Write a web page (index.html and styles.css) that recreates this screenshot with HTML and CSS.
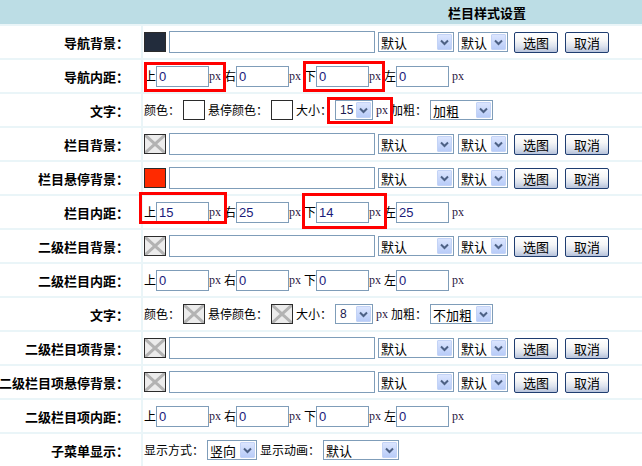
FILE: index.html
```html
<!DOCTYPE html>
<html lang="zh-CN">
<head>
<meta charset="utf-8">
<title>栏目样式设置</title>
<link rel="stylesheet" href="styles.css">
</head>
<body>
<div class="page">
  <div class="grid">
    <div class="head">栏目样式设置</div>

    <div class="label">导航背景：</div>
    <div class="cell">
      <span class="swatch dark"></span>
      <input class="txt wide" type="text" value="">
      <span class="sel s76"><span class="sv">默认</span><span class="arr"><svg width="13" height="14" viewBox="0 0 13 14"><path d="M3 5.5 L6.5 9 L10 5.5" fill="none" stroke="#4d6185" stroke-width="2"/></svg></span></span>
      <span class="sel s50 ml1"><span class="sv">默认</span><span class="arr"><svg width="13" height="14" viewBox="0 0 13 14"><path d="M3 5.5 L6.5 9 L10 5.5" fill="none" stroke="#4d6185" stroke-width="2"/></svg></span></span>
      <button class="btn b1" type="button">选图</button>
      <button class="btn b2" type="button">取消</button>
    </div>

    <div class="label">导航内距：</div>
    <div class="cell tight">
      <span>上</span><input class="txt sm" type="text" value="0"><span class="px">px</span>
      <span>右</span><input class="txt sm" type="text" value="0"><span class="px">px</span>
      <span>下</span><input class="txt sm" type="text" value="0"><span class="px">px</span>
      <span>左</span><input class="txt sm" type="text" value="0"><span class="px last">px</span>
    </div>

    <div class="label">文字：</div>
    <div class="cell">
      <span>颜色：</span><span class="swatch white"></span>
      <span>悬停颜色：</span><span class="swatch white"></span>
      <span>大小：</span>
      <span class="sel s38"><span class="sv num">15</span><span class="arr"><svg width="13" height="14" viewBox="0 0 13 14"><path d="M3 5.5 L6.5 9 L10 5.5" fill="none" stroke="#4d6185" stroke-width="2"/></svg></span></span>
      <span class="px">px</span>
      <span>加粗：</span>
      <span class="sel s63"><span class="sv">加粗</span><span class="arr"><svg width="13" height="14" viewBox="0 0 13 14"><path d="M3 5.5 L6.5 9 L10 5.5" fill="none" stroke="#4d6185" stroke-width="2"/></svg></span></span>
    </div>

    <div class="label">栏目背景：</div>
    <div class="cell">
      <span class="swatch none"><svg width="20" height="18" viewBox="0 0 20 18"><rect width="20" height="18" fill="#ececec"/><path d="M0 0 L20 18 M20 0 L0 18" stroke="#b3b3b3" stroke-width="3"/></svg></span>
      <input class="txt wide" type="text" value="">
      <span class="sel s76"><span class="sv">默认</span><span class="arr"><svg width="13" height="14" viewBox="0 0 13 14"><path d="M3 5.5 L6.5 9 L10 5.5" fill="none" stroke="#4d6185" stroke-width="2"/></svg></span></span>
      <span class="sel s50 ml1"><span class="sv">默认</span><span class="arr"><svg width="13" height="14" viewBox="0 0 13 14"><path d="M3 5.5 L6.5 9 L10 5.5" fill="none" stroke="#4d6185" stroke-width="2"/></svg></span></span>
      <button class="btn b1" type="button">选图</button>
      <button class="btn b2" type="button">取消</button>
    </div>

    <div class="label">栏目悬停背景：</div>
    <div class="cell">
      <span class="swatch red"></span>
      <input class="txt wide" type="text" value="">
      <span class="sel s76"><span class="sv">默认</span><span class="arr"><svg width="13" height="14" viewBox="0 0 13 14"><path d="M3 5.5 L6.5 9 L10 5.5" fill="none" stroke="#4d6185" stroke-width="2"/></svg></span></span>
      <span class="sel s50 ml1"><span class="sv">默认</span><span class="arr"><svg width="13" height="14" viewBox="0 0 13 14"><path d="M3 5.5 L6.5 9 L10 5.5" fill="none" stroke="#4d6185" stroke-width="2"/></svg></span></span>
      <button class="btn b1" type="button">选图</button>
      <button class="btn b2" type="button">取消</button>
    </div>

    <div class="label">栏目内距：</div>
    <div class="cell tight">
      <span>上</span><input class="txt sm" type="text" value="15"><span class="px">px</span>
      <span>右</span><input class="txt sm" type="text" value="25"><span class="px">px</span>
      <span>下</span><input class="txt sm" type="text" value="14"><span class="px">px</span>
      <span>左</span><input class="txt sm" type="text" value="25"><span class="px last">px</span>
    </div>

    <div class="label">二级栏目背景：</div>
    <div class="cell">
      <span class="swatch none"><svg width="20" height="18" viewBox="0 0 20 18"><rect width="20" height="18" fill="#ececec"/><path d="M0 0 L20 18 M20 0 L0 18" stroke="#b3b3b3" stroke-width="3"/></svg></span>
      <input class="txt wide" type="text" value="">
      <span class="sel s76"><span class="sv">默认</span><span class="arr"><svg width="13" height="14" viewBox="0 0 13 14"><path d="M3 5.5 L6.5 9 L10 5.5" fill="none" stroke="#4d6185" stroke-width="2"/></svg></span></span>
      <span class="sel s50 ml1"><span class="sv">默认</span><span class="arr"><svg width="13" height="14" viewBox="0 0 13 14"><path d="M3 5.5 L6.5 9 L10 5.5" fill="none" stroke="#4d6185" stroke-width="2"/></svg></span></span>
      <button class="btn b1" type="button">选图</button>
      <button class="btn b2" type="button">取消</button>
    </div>

    <div class="label">二级栏目内距：</div>
    <div class="cell tight">
      <span>上</span><input class="txt sm" type="text" value="0"><span class="px">px</span>
      <span>右</span><input class="txt sm" type="text" value="0"><span class="px">px</span>
      <span>下</span><input class="txt sm" type="text" value="0"><span class="px">px</span>
      <span>左</span><input class="txt sm" type="text" value="0"><span class="px last">px</span>
    </div>

    <div class="label">文字：</div>
    <div class="cell">
      <span>颜色：</span><span class="swatch none"><svg width="20" height="18" viewBox="0 0 20 18"><rect width="20" height="18" fill="#ececec"/><path d="M0 0 L20 18 M20 0 L0 18" stroke="#b3b3b3" stroke-width="3"/></svg></span>
      <span>悬停颜色：</span><span class="swatch none"><svg width="20" height="18" viewBox="0 0 20 18"><rect width="20" height="18" fill="#ececec"/><path d="M0 0 L20 18 M20 0 L0 18" stroke="#b3b3b3" stroke-width="3"/></svg></span>
      <span>大小：</span>
      <span class="sel s38"><span class="sv num">8</span><span class="arr"><svg width="13" height="14" viewBox="0 0 13 14"><path d="M3 5.5 L6.5 9 L10 5.5" fill="none" stroke="#4d6185" stroke-width="2"/></svg></span></span>
      <span class="px">px</span>
      <span>加粗：</span>
      <span class="sel s63"><span class="sv">不加粗</span><span class="arr"><svg width="13" height="14" viewBox="0 0 13 14"><path d="M3 5.5 L6.5 9 L10 5.5" fill="none" stroke="#4d6185" stroke-width="2"/></svg></span></span>
    </div>

    <div class="label">二级栏目项背景：</div>
    <div class="cell">
      <span class="swatch none"><svg width="20" height="18" viewBox="0 0 20 18"><rect width="20" height="18" fill="#ececec"/><path d="M0 0 L20 18 M20 0 L0 18" stroke="#b3b3b3" stroke-width="3"/></svg></span>
      <input class="txt wide" type="text" value="">
      <span class="sel s76"><span class="sv">默认</span><span class="arr"><svg width="13" height="14" viewBox="0 0 13 14"><path d="M3 5.5 L6.5 9 L10 5.5" fill="none" stroke="#4d6185" stroke-width="2"/></svg></span></span>
      <span class="sel s50 ml1"><span class="sv">默认</span><span class="arr"><svg width="13" height="14" viewBox="0 0 13 14"><path d="M3 5.5 L6.5 9 L10 5.5" fill="none" stroke="#4d6185" stroke-width="2"/></svg></span></span>
      <button class="btn b1" type="button">选图</button>
      <button class="btn b2" type="button">取消</button>
    </div>

    <div class="label">二级栏目项悬停背景：</div>
    <div class="cell">
      <span class="swatch none"><svg width="20" height="18" viewBox="0 0 20 18"><rect width="20" height="18" fill="#ececec"/><path d="M0 0 L20 18 M20 0 L0 18" stroke="#b3b3b3" stroke-width="3"/></svg></span>
      <input class="txt wide" type="text" value="">
      <span class="sel s76"><span class="sv">默认</span><span class="arr"><svg width="13" height="14" viewBox="0 0 13 14"><path d="M3 5.5 L6.5 9 L10 5.5" fill="none" stroke="#4d6185" stroke-width="2"/></svg></span></span>
      <span class="sel s50 ml1"><span class="sv">默认</span><span class="arr"><svg width="13" height="14" viewBox="0 0 13 14"><path d="M3 5.5 L6.5 9 L10 5.5" fill="none" stroke="#4d6185" stroke-width="2"/></svg></span></span>
      <button class="btn b1" type="button">选图</button>
      <button class="btn b2" type="button">取消</button>
    </div>

    <div class="label">二级栏目项内距：</div>
    <div class="cell tight">
      <span>上</span><input class="txt sm" type="text" value="0"><span class="px">px</span>
      <span>右</span><input class="txt sm" type="text" value="0"><span class="px">px</span>
      <span>下</span><input class="txt sm" type="text" value="0"><span class="px">px</span>
      <span>左</span><input class="txt sm" type="text" value="0"><span class="px last">px</span>
    </div>

    <div class="label">子菜单显示：</div>
    <div class="cell">
      <span>显示方式：</span>
      <span class="sel s50"><span class="sv">竖向</span><span class="arr"><svg width="13" height="14" viewBox="0 0 13 14"><path d="M3 5.5 L6.5 9 L10 5.5" fill="none" stroke="#4d6185" stroke-width="2"/></svg></span></span>
      <span>显示动画：</span>
      <span class="sel s76"><span class="sv">默认</span><span class="arr"><svg width="13" height="14" viewBox="0 0 13 14"><path d="M3 5.5 L6.5 9 L10 5.5" fill="none" stroke="#4d6185" stroke-width="2"/></svg></span></span>
    </div>
  </div>

  <span class="mark m1"></span>
  <span class="mark m2"></span>
  <span class="mark m3"></span>
  <span class="mark m4"></span>
  <span class="mark m5"></span>
</div>
</body>
</html>
```

FILE: styles.css
```css
html, body {
  margin: 0;
  padding: 0;
  overflow: hidden;
  background: #ffffff;
}

body {
  font-family: "Noto Sans CJK SC", "Liberation Sans", sans-serif;
  font-size: 12px;
  color: #000000;
}

.page {
  position: relative;
  width: 100%;
}

.grid {
  display: grid;
  grid-template-columns: 141px 1fr;
  column-gap: 2px;
  row-gap: 2px;
  background: #eaf5f8;
}

.head {
  grid-column: 1 / 3;
  height: 24px;
  background: #bcdde5;
  display: flex;
  align-items: center;
  justify-content: flex-start;
  padding-left: 448px;
  font-size: 13px;
  font-weight: bold;
}

.label {
  height: 32px;
  background: #ffffff;
  display: flex;
  align-items: center;
  justify-content: flex-end;
  padding-right: 12px;
  font-size: 13px;
  font-weight: bold;
  white-space: nowrap;
  overflow: hidden;
}

.cell {
  height: 32px;
  background: #ffffff;
  display: flex;
  align-items: center;
  gap: 3px;
  padding-left: 1px;
  white-space: nowrap;
  line-height: 1;
  overflow: hidden;
}

.cell.tight {
  gap: 0;
}

.swatch {
  box-sizing: border-box;
  width: 22px;
  height: 20px;
  border: 1px solid #2b2b2b;
  display: inline-block;
  flex: none;
  overflow: hidden;
}

.swatch svg {
  display: block;
}

.swatch.dark { background: #222c3c; }
.swatch.white { background: #ffffff; }
.swatch.red { background: #ff2a00; }

.txt {
  box-sizing: border-box;
  border: 1px solid #7f9db9;
  background: #ffffff;
  margin: 0;
  padding: 0 2px;
  font-family: "Liberation Sans", sans-serif;
  font-size: 13px;
  color: #1a1a7a;
  outline: none;
  flex: none;
}

.txt.wide {
  width: 206px;
  height: 22px;
}

.txt.sm {
  width: 53px;
  height: 21px;
}

.px {
  font-family: "Liberation Serif", serif;
  font-size: 12px;
  color: #2a1540;
}

.tight .px {
  margin-right: 3px;
}

.tight .px.last {
  margin-right: 0;
  margin-left: 3px;
}

.sel {
  box-sizing: border-box;
  height: 20px;
  border: 1px solid #7f9db9;
  background: #ffffff;
  display: inline-flex;
  align-items: center;
  justify-content: space-between;
  padding: 0 1px 0 2px;
  font-family: "Noto Sans CJK SC", sans-serif;
  font-size: 13px;
  flex: none;
}

.sel .sv.num {
  font-family: "Liberation Sans", sans-serif;
  font-size: 12px;
  padding-left: 2px;
  color: #1a1a50;
}

.s76 { width: 76px; }
.s50 { width: 50px; }
.s38 { width: 38px; }
.s63 { width: 63px; }

.ml1 { margin-left: 1px; }

.arr {
  box-sizing: border-box;
  width: 15px;
  height: 16px;
  border: 1px solid #c3d3f6;
  border-radius: 1px;
  background: linear-gradient(#dbe5fe, #b8ccf8);
  display: flex;
  align-items: center;
  justify-content: center;
}

.arr svg {
  display: block;
}

.btn {
  box-sizing: border-box;
  width: 44px;
  height: 21px;
  margin: 0;
  padding: 0;
  border: 1px solid #1f3d70;
  border-radius: 2px;
  background: linear-gradient(#ffffff 0%, #f6f6f6 40%, #dde3ee 70%, #b6c2da 100%);
  font-family: "Noto Sans CJK SC", sans-serif;
  font-size: 13px;
  color: #000000;
  line-height: 1;
  flex: none;
}

.btn.b1 { margin-left: 3px; }
.btn.b2 { margin-left: 4px; }

.mark {
  position: absolute;
  box-sizing: border-box;
  border: 3px solid #ff0000;
  pointer-events: none;
}

.m1 { left: 144px; top: 62px; width: 82px; height: 30px; }
.m2 { left: 303px; top: 61px; width: 82px; height: 31px; }
.m3 { left: 327px; top: 97px; width: 66px; height: 27px; }
.m4 { left: 139px; top: 192px; width: 88px; height: 32px; }
.m5 { left: 302px; top: 193px; width: 85px; height: 36px; }
```
